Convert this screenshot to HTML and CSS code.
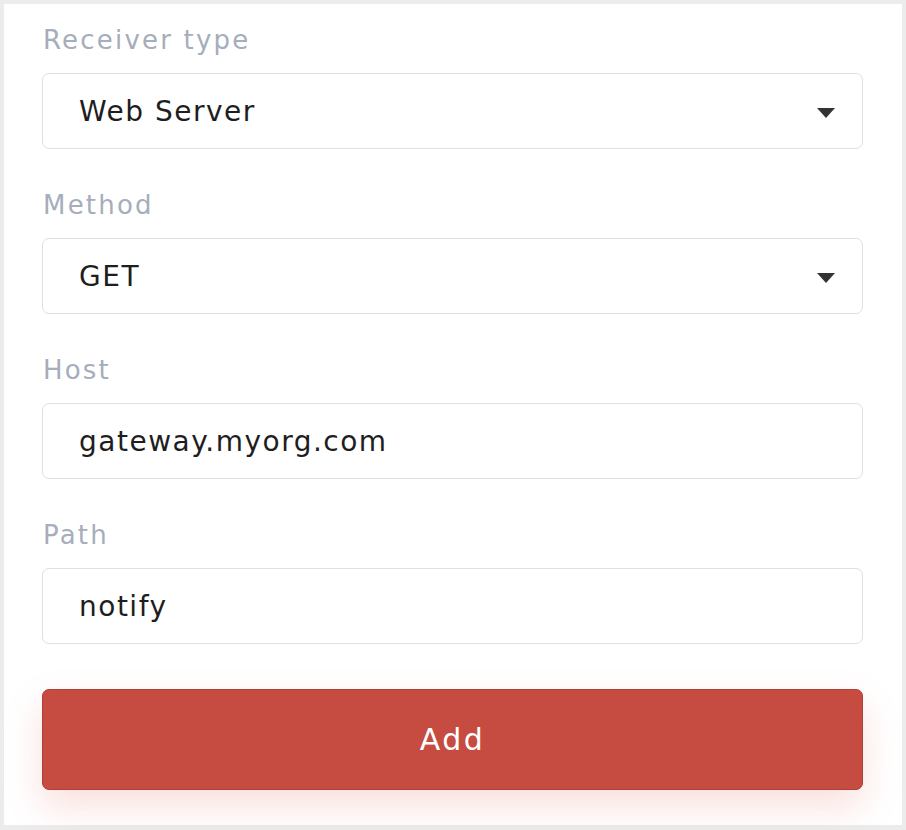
FILE: index.html
```html
<!DOCTYPE html>
<html lang="en">
<head>
<meta charset="utf-8">
<title>Add receiver</title>
<link rel="stylesheet" href="styles.css">
</head>
<body>
<form class="card">
  <div class="field">
    <label class="label">Receiver type</label>
    <div class="control select">
      <span class="value">Web Server</span>
      <svg class="caret" width="18" height="10" viewBox="0 0 18 10"><path d="M0 0H18L9 10Z" fill="#333"/></svg>
    </div>
  </div>
  <div class="field">
    <label class="label">Method</label>
    <div class="control select">
      <span class="value">GET</span>
      <svg class="caret" width="18" height="10" viewBox="0 0 18 10"><path d="M0 0H18L9 10Z" fill="#333"/></svg>
    </div>
  </div>
  <div class="field">
    <label class="label">Host</label>
    <div class="control"><span class="value">gateway.myorg.com</span></div>
  </div>
  <div class="field">
    <label class="label">Path</label>
    <div class="control"><span class="value">notify</span></div>
  </div>
  <button type="button" class="btn">Add</button>
</form>
</body>
</html>
```
FILE: styles.css
```css
html, body {
  margin: 0;
  padding: 0;
}
body {
  background: #ececec;
  padding: 4px 4px 5px 4px;
  font-family: "DejaVu Sans", "Noto Sans", sans-serif;
}
.card {
  background: #ffffff;
  height: 821px;
  box-sizing: border-box;
  padding: 19px 39px 0 38px;
  display: flex;
  flex-direction: column;
}
.field {
  display: flex;
  flex-direction: column;
  gap: 16px;
  margin-bottom: 39px;
}
.label {
  font-size: 26px;
  line-height: 34px;
  color: #a6adbb;
  letter-spacing: 2.2px;
  padding-left: 1px;
}
.control {
  height: 76px;
  box-sizing: border-box;
  border: 1.5px solid #dcdfe5;
  border-radius: 7px;
  display: flex;
  align-items: center;
  padding: 0 27px 0 36px;
}
.value {
  font-size: 28px;
  color: #1e1e1e;
  letter-spacing: 1.5px;
  flex: 1;
}
.caret {
  display: block;
  margin-top: 4px;
}
.btn {
  margin-top: 6px;
  height: 101px;
  border: 1px solid #b23f37;
  border-radius: 7px;
  background: #c64b41;
  color: #ffffff;
  font-family: inherit;
  font-size: 30px;
  letter-spacing: 2.5px;
  box-shadow: 0 16px 36px rgba(230, 120, 110, 0.24);
  cursor: pointer;
}
```
